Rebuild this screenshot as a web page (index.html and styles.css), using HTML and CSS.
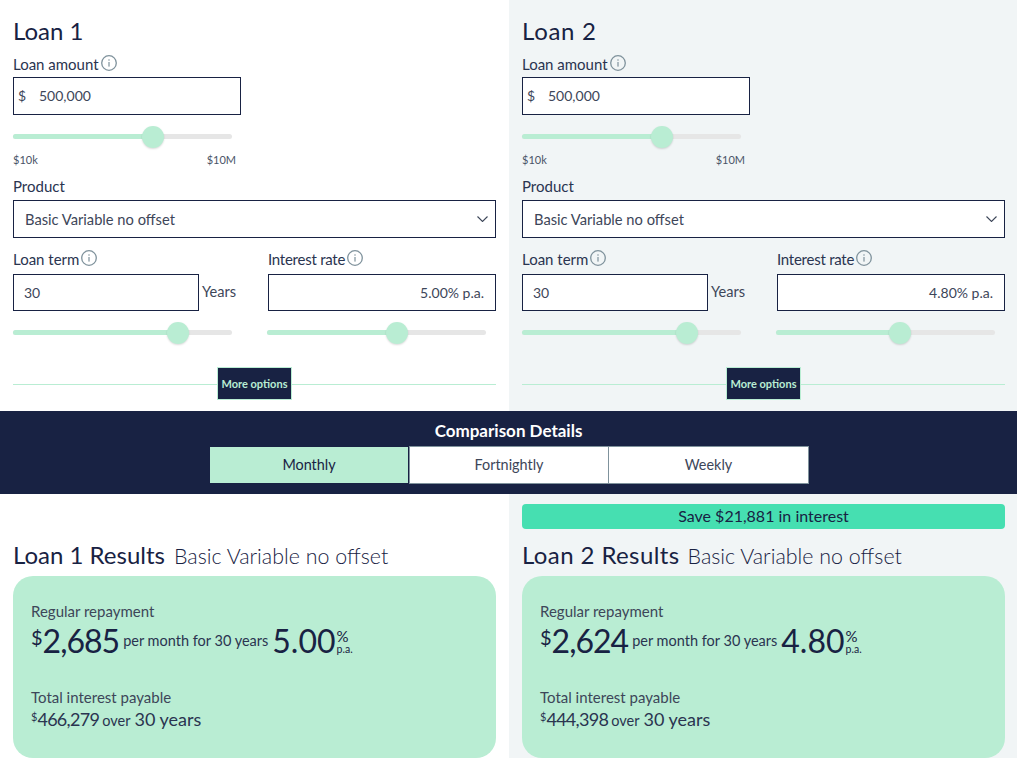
FILE: index.html
```html
<!DOCTYPE html>
<html lang="en">
<head>
<meta charset="utf-8">
<title>Loan comparison</title>
<link rel="stylesheet" href="styles.css">
</head>
<body>
<svg class="defs" width="0" height="0" aria-hidden="true">
  <symbol id="info" viewBox="0 0 16 16">
    <circle cx="8" cy="8" r="7.3" fill="none" stroke="#7f929c" stroke-width="1.3"/>
    <rect x="7.4" y="7" width="1.2" height="4.6" fill="#7f929c"/>
    <rect x="7.4" y="4.3" width="1.2" height="1.4" fill="#7f929c"/>
  </symbol>
</svg>
<main class="page">
  <section class="inputs">
    <div class="panel">
      <h2 class="title">Loan 1</h2>
      <div class="label">Loan amount<svg class="info"><use href="#info"/></svg></div>
      <div class="field amount"><span class="cur">$</span><span>500,000</span></div>
      <div class="slider amount-slider"><div class="fill" style="width:140px"></div><div class="thumb" style="left:129px"></div></div>
      <div class="range"><span>$10k</span><span>$10M</span></div>
      <div class="label product-label">Product</div>
      <div class="field select"><span>Basic Variable no offset</span><svg class="chev" viewBox="0 0 11 6"><path d="M.5.5l5 5 5-5" fill="none" stroke="#3c4658" stroke-width="1.1"/></svg></div>
      <div class="pair">
        <div class="col">
          <div class="label">Loan term<svg class="info"><use href="#info"/></svg></div>
          <div class="term-row"><div class="field term"><span>30</span></div><span class="unit">Years</span></div>
          <div class="slider"><div class="fill" style="width:165px"></div><div class="thumb" style="left:154px"></div></div>
        </div>
        <div class="col">
          <div class="label tight">Interest rate<svg class="info"><use href="#info"/></svg></div>
          <div class="field rate"><span>5.00% p.a.</span></div>
          <div class="slider"><div class="fill" style="width:130px"></div><div class="thumb" style="left:119px"></div></div>
        </div>
      </div>
      <div class="more"><span class="rule"></span><button class="more-btn" type="button">More options</button><span class="rule"></span></div>
    </div>
    <div class="panel alt">
      <h2 class="title wide">Loan 2</h2>
      <div class="label">Loan amount<svg class="info"><use href="#info"/></svg></div>
      <div class="field amount"><span class="cur">$</span><span>500,000</span></div>
      <div class="slider amount-slider"><div class="fill" style="width:140px"></div><div class="thumb" style="left:129px"></div></div>
      <div class="range"><span>$10k</span><span>$10M</span></div>
      <div class="label product-label">Product</div>
      <div class="field select"><span>Basic Variable no offset</span><svg class="chev" viewBox="0 0 11 6"><path d="M.5.5l5 5 5-5" fill="none" stroke="#3c4658" stroke-width="1.1"/></svg></div>
      <div class="pair">
        <div class="col">
          <div class="label">Loan term<svg class="info"><use href="#info"/></svg></div>
          <div class="term-row"><div class="field term"><span>30</span></div><span class="unit">Years</span></div>
          <div class="slider"><div class="fill" style="width:165px"></div><div class="thumb" style="left:154px"></div></div>
        </div>
        <div class="col">
          <div class="label tight">Interest rate<svg class="info"><use href="#info"/></svg></div>
          <div class="field rate"><span>4.80% p.a.</span></div>
          <div class="slider"><div class="fill" style="width:124px"></div><div class="thumb" style="left:113px"></div></div>
        </div>
      </div>
      <div class="more"><span class="rule"></span><button class="more-btn" type="button">More options</button><span class="rule"></span></div>
    </div>
  </section>
  <section class="band">
    <h3 class="band-title">Comparison Details</h3>
    <div class="tabs">
      <div class="tab active">Monthly</div>
      <div class="tab">Fortnightly</div>
      <div class="tab last">Weekly</div>
    </div>
  </section>
  <section class="results">
    <div class="panel res">
      <div class="save empty"></div>
      <div class="res-head"><span class="res-title">Loan 1 Results</span><span class="res-sub">Basic Variable no offset</span></div>
      <div class="card">
        <div class="card-label">Regular repayment</div>
        <div class="big-row"><sup class="big-sup">$</sup><span class="big amt">2,685</span><span class="per">per month for 30 years</span><span class="big">5.00</span><span class="pct"><span class="pc">%</span><span class="pa">p.a.</span></span></div>
        <div class="card-label second">Total interest payable</div>
        <div class="total-row"><sup class="small-sup">$</sup><span class="tot">466,279</span><span class="over">over</span><span>30 years</span></div>
      </div>
    </div>
    <div class="panel alt res">
      <div class="save">Save $21,881 in interest</div>
      <div class="res-head"><span class="res-title wide">Loan 2 Results</span><span class="res-sub">Basic Variable no offset</span></div>
      <div class="card">
        <div class="card-label">Regular repayment</div>
        <div class="big-row"><sup class="big-sup">$</sup><span class="big amt">2,624</span><span class="per">per month for 30 years</span><span class="big">4.80</span><span class="pct"><span class="pc">%</span><span class="pa">p.a.</span></span></div>
        <div class="card-label second">Total interest payable</div>
        <div class="total-row"><sup class="small-sup">$</sup><span class="tot">444,398</span><span class="over">over</span><span>30 years</span></div>
      </div>
    </div>
  </section>
</main>
</body>
</html>
```
FILE: styles.css
```css
* { box-sizing: border-box; }
html, body { margin: 0; padding: 0; background: #fff; }
body { font-family: "Lato", "Liberation Sans", sans-serif; color: #182243; overflow: hidden; height: 766px; }
.defs { position: absolute; }
.page { width: 1017px; }
.inputs, .results { display: grid; grid-template-columns: 509px 508px; }
.panel { padding: 0 13px; }
.panel.alt { background: #f1f5f6; padding-left: 13px; padding-right: 12px; }
.title { margin: 0; height: 56px; padding-top: 16px; font-size: 24px; line-height: 30px; font-weight: 400; }
.title.wide { letter-spacing: .7px; }
.res-title.wide { letter-spacing: .4px; margin-right: -1px; }
.label { display: flex; align-items: flex-start; height: 21px; font-size: 15px; line-height: 17px; color: #2a3450; }
.tight { letter-spacing: -.25px; }
.info { width: 16px; height: 16px; margin-left: 2px; margin-top: -1px; }
.field { display: flex; align-items: center; height: 38px; border: 1px solid #182243; background: #fff; font-size: 14px; color: #3d4659; }
.amount { width: 228px; padding: 0 0 2px 4px; }
.cur { width: 21px; }
.slider { position: relative; width: 219px; height: 5px; border-radius: 3px; background: #e6e6e6; }
.fill { height: 5px; border-radius: 3px; background: #b9edd3; }
.thumb { position: absolute; top: -8.5px; width: 22px; height: 22px; border-radius: 50%; background: #b9edd3; box-shadow: 0 1px 2px rgba(0,0,0,.15); }
.amount-slider { margin-top: 19px; }
.range { display: flex; justify-content: space-between; width: 223px; height: 17px; margin-top: 13px; font-size: 11px; line-height: 16px; color: #4a5468; }
.product-label { margin-top: 9px; height: 22px; }
.select { width: 100%; justify-content: space-between; padding: 0 7px 0 11px; height: 38px; font-size: 14.7px; }
.chev { width: 11px; height: 6px; }
.pair { display: grid; grid-template-columns: 255px 228px; margin-top: 11px; }
.col .label { height: 25px; padding-top: 2px; }
.term-row { display: flex; align-items: center; }
.term { width: 186px; height: 37px; padding-left: 10px; }
.unit { margin-left: 3px; font-size: 14.6px; color: #3d4659; margin-top: -3px; }
.rate { width: 228px; height: 37px; justify-content: flex-end; padding-right: 11px; }
.col .slider { margin-top: 19px; }
.col:last-child .slider { margin-left: -1px; }
.more { display: flex; align-items: flex-start; height: 33px; margin-top: 32px; margin-bottom: 11px; }
.rule { flex: 1; height: 1px; margin-top: 17px; background: #b9edd3; }
.more-btn { flex: none; width: 75px; height: 33px; padding: 0; border: 1px solid #b9edd3; background: #182243; color: #b9edd3; font: 700 11px "Lato", sans-serif; }
.band { height: 83px; background: #182243; padding-top: 10px; text-align: center; }
.band-title { margin: 0; height: 25px; font-size: 17px; line-height: 20px; font-weight: 700; color: #fff; }
.tabs { display: grid; grid-template-columns: 200px 200px 200px; width: 600px; margin-left: 209px; height: 38px; }
.tab { background: #fff; border: 1px solid #7f929c; font-size: 14.4px; line-height: 36px; color: #3d4659; }
.tab.last { border-left: 0; }
.tab.active { background: #b9edd3; background-clip: padding-box; border-color: #182243; color: #182243; }
.res { height: 264px; padding-top: 10px; }
.panel.alt.res { padding-top: 10px; }
.save { height: 25px; border-radius: 4px; background: #46dfb1; text-align: center; font-size: 16px; line-height: 24px; }
.save.empty { background: none; }
.res-head { display: flex; align-items: baseline; gap: 9px; height: 47px; padding-top: 11px; }
.res-title { font-size: 24px; line-height: 30px; }
.res-sub { font-size: 21.4px; line-height: 30px; color: #182243; font-weight: 300; }
.card { height: 182px; border-radius: 20px; background: #b9edd3; padding: 27px 18px 0; }
.card-label { font-size: 15px; line-height: 17px; color: #3d4659; }
.card-label.second { margin-top: 29px; }
.big-row { display: flex; align-items: center; height: 38px; margin-top: 2px; }
.big { font-size: 32px; line-height: 38px; }
.amt { letter-spacing: -1px; }
.big-sup { font-size: 20px; line-height: 20px; align-self: flex-start; margin-top: 5px; vertical-align: baseline; }
.per { font-size: 14.5px; line-height: 18px; margin: 0 4px; color: #2a3450; }
.pct { display: flex; flex-direction: column; align-self: flex-end; margin-left: 1px; margin-bottom: 5px; }
.pc { font-size: 15px; line-height: 15px; }
.pa { font-size: 10.5px; line-height: 11px; }
.total-row { display: flex; align-items: baseline; font-size: 18px; line-height: 24px; margin-top: 1px; color: #2a3450; }
.tot { letter-spacing: -0.7px; }
.small-sup { font-size: 11px; line-height: 12px; align-self: flex-start; margin-top: 4px; }
.over { font-size: 14.5px; margin: 0 4px 0 3px; }
```
